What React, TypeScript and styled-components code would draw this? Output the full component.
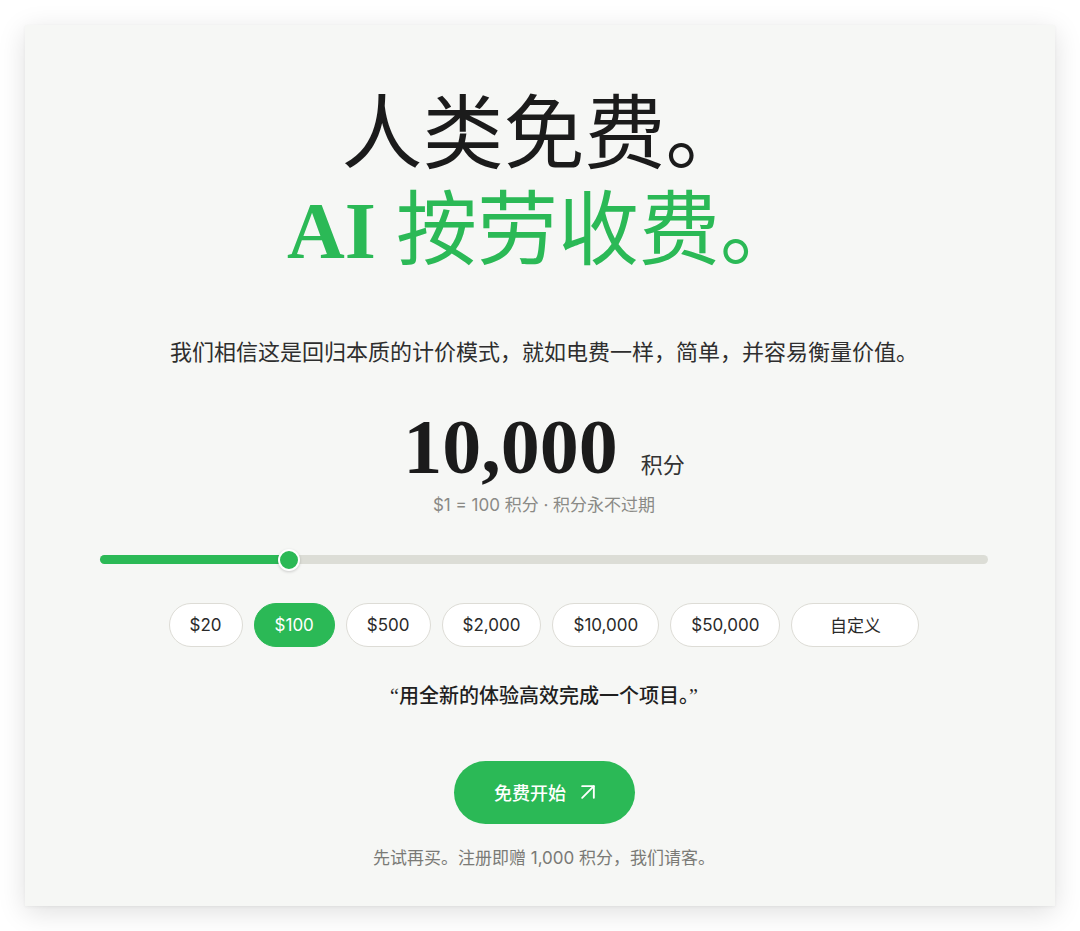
import React, { useState } from 'react';
import styled, { createGlobalStyle } from 'styled-components';
import { ArrowUpRight } from 'lucide-react';

const GREEN = '#2bb956';
const SANS = `Inter, "Noto Sans CJK SC", sans-serif`;
const SERIF = `"Liberation Serif", "Noto Sans CJK SC", serif`;

const GlobalStyle = createGlobalStyle`
  html, body {
    margin: 0;
    padding: 0;
    background: #ffffff;
  }
  body {
    font-family: ${SANS};
    -webkit-font-smoothing: antialiased;
  }
`;

const Page = styled.div`
  padding: 25px;
  box-sizing: border-box;
  width: 1080px;
`;

const Card = styled.section`
  background: #f6f7f5;
  box-shadow: 0 6px 26px rgba(0, 0, 0, 0.13), 0 1px 3px rgba(0, 0, 0, 0.05);
  padding: 62px 63px 36px 71px;
  display: flex;
  flex-direction: column;
  align-items: center;
  height: 881px;
  box-sizing: border-box;
`;

const Headline = styled.h1`
  margin: 0;
  font-family: ${SERIF};
  font-size: 81px;
  line-height: 96px;
  font-weight: 400;
  text-align: center;
  color: #1b1b1b;
`;

const HeadLine = styled.span<{ accent?: boolean }>`
  display: block;
  color: ${(p) => (p.accent ? GREEN : '#1b1b1b')};
`;

const Latin = styled.span`
  font-family: "Liberation Serif", serif;
  font-weight: 700;
  font-size: 80px;
`;

const Lead = styled.p`
  margin: 57px 0 0;
  font-size: 22px;
  line-height: 32px;
  color: #2e2e2e;
`;

const AmountRow = styled.div`
  margin-top: 42px;
  display: flex;
  align-items: baseline;
  gap: 23px;
`;

const Amount = styled.span`
  font-family: "Liberation Serif", serif;
  font-weight: 700;
  font-size: 78px;
  line-height: 74px;
  color: #1b1b1b;
`;

const Unit = styled.span`
  font-size: 22px;
  color: #333;
`;

const Rate = styled.div`
  margin-top: 9px;
  font-size: 17px;
  line-height: 24px;
  color: #8a8a86;
`;

const SliderWrap = styled.div`
  margin-top: 31px;
  width: 888px;
  height: 24px;
  display: flex;
  align-items: center;
`;

const Track = styled.div`
  position: relative;
  width: 100%;
  height: 9px;
  border-radius: 5px;
  background: #dcddd6;
`;

const Fill = styled.div`
  height: 100%;
  border-radius: 5px;
  background: ${GREEN};
`;

const Thumb = styled.div`
  position: absolute;
  top: 50%;
  width: 22px;
  height: 22px;
  border-radius: 50%;
  background: ${GREEN};
  border: 2px solid #ffffff;
  box-shadow: 0 1px 3px rgba(0, 0, 0, 0.18);
  box-sizing: border-box;
  transform: translate(-50%, -50%);
`;

const Pills = styled.div`
  margin-top: 31px;
  display: flex;
  gap: 11px;
`;

const Pill = styled.button<{ active?: boolean; wide?: boolean }>`
  height: 44px;
  padding: 0 20px;
  min-width: ${(p) => (p.wide ? '128px' : '0')};
  border-radius: 22px;
  border: 1px solid ${(p) => (p.active ? GREEN : '#dddcd6')};
  background: ${(p) => (p.active ? GREEN : '#ffffff')};
  color: ${(p) => (p.active ? '#ffffff' : '#2a2a2a')};
  font-family: ${SANS};
  font-size: 17px;
  cursor: pointer;
  box-sizing: border-box;
`;

const Quote = styled.p`
  margin: 34px 0 0;
  font-family: ${SERIF};
  font-size: 20px;
  line-height: 30px;
  font-weight: 500;
  color: #1f1f1f;
`;

const StartButton = styled.button`
  margin-top: 50px;
  width: 181px;
  height: 64px;
  border-radius: 32px;
  border: none;
  background: ${GREEN};
  color: #ffffff;
  font-family: ${SANS};
  font-size: 18px;
  font-weight: 500;
  display: flex;
  align-items: center;
  justify-content: center;
  gap: 8px;
  padding: 0 0 0 8px;
  cursor: pointer;
`;

const Note = styled.div`
  margin-top: 22px;
  font-size: 17px;
  line-height: 24px;
  color: #7a7a76;
`;

const presets = [
  { label: '$20', value: 20 },
  { label: '$100', value: 100 },
  { label: '$500', value: 500 },
  { label: '$2,000', value: 2000 },
  { label: '$10,000', value: 10000 },
  { label: '$50,000', value: 50000 },
];

const App = () => {
  const [dollars, setDollars] = useState(100);
  const percent = 21.3;

  return (
    <Page>
      <GlobalStyle />
      <Card>
        <Headline>
          <HeadLine>人类免费。</HeadLine>
          <HeadLine accent>
            <Latin>AI</Latin> 按劳收费。
          </HeadLine>
        </Headline>

        <Lead>我们相信这是回归本质的计价模式，就如电费一样，简单，并容易衡量价值。</Lead>

        <AmountRow>
          <Amount>{(dollars * 100).toLocaleString('en-US')}</Amount>
          <Unit>积分</Unit>
        </AmountRow>
        <Rate>$1 = 100 积分 · 积分永不过期</Rate>

        <SliderWrap>
          <Track>
            <Fill style={{ width: `${percent}%` }} />
            <Thumb style={{ left: `${percent}%` }} />
          </Track>
        </SliderWrap>

        <Pills>
          {presets.map((p) => (
            <Pill key={p.value} active={p.value === dollars} onClick={() => setDollars(p.value)}>
              {p.label}
            </Pill>
          ))}
          <Pill wide>自定义</Pill>
        </Pills>

        <Quote>“用全新的体验高效完成一个项目。”</Quote>

        <StartButton>
          免费开始
          <ArrowUpRight size={28} strokeWidth={1.6} />
        </StartButton>

        <Note>先试再买。注册即赠 1,000 积分，我们请客。</Note>
      </Card>
    </Page>
  );
};

export default App;
